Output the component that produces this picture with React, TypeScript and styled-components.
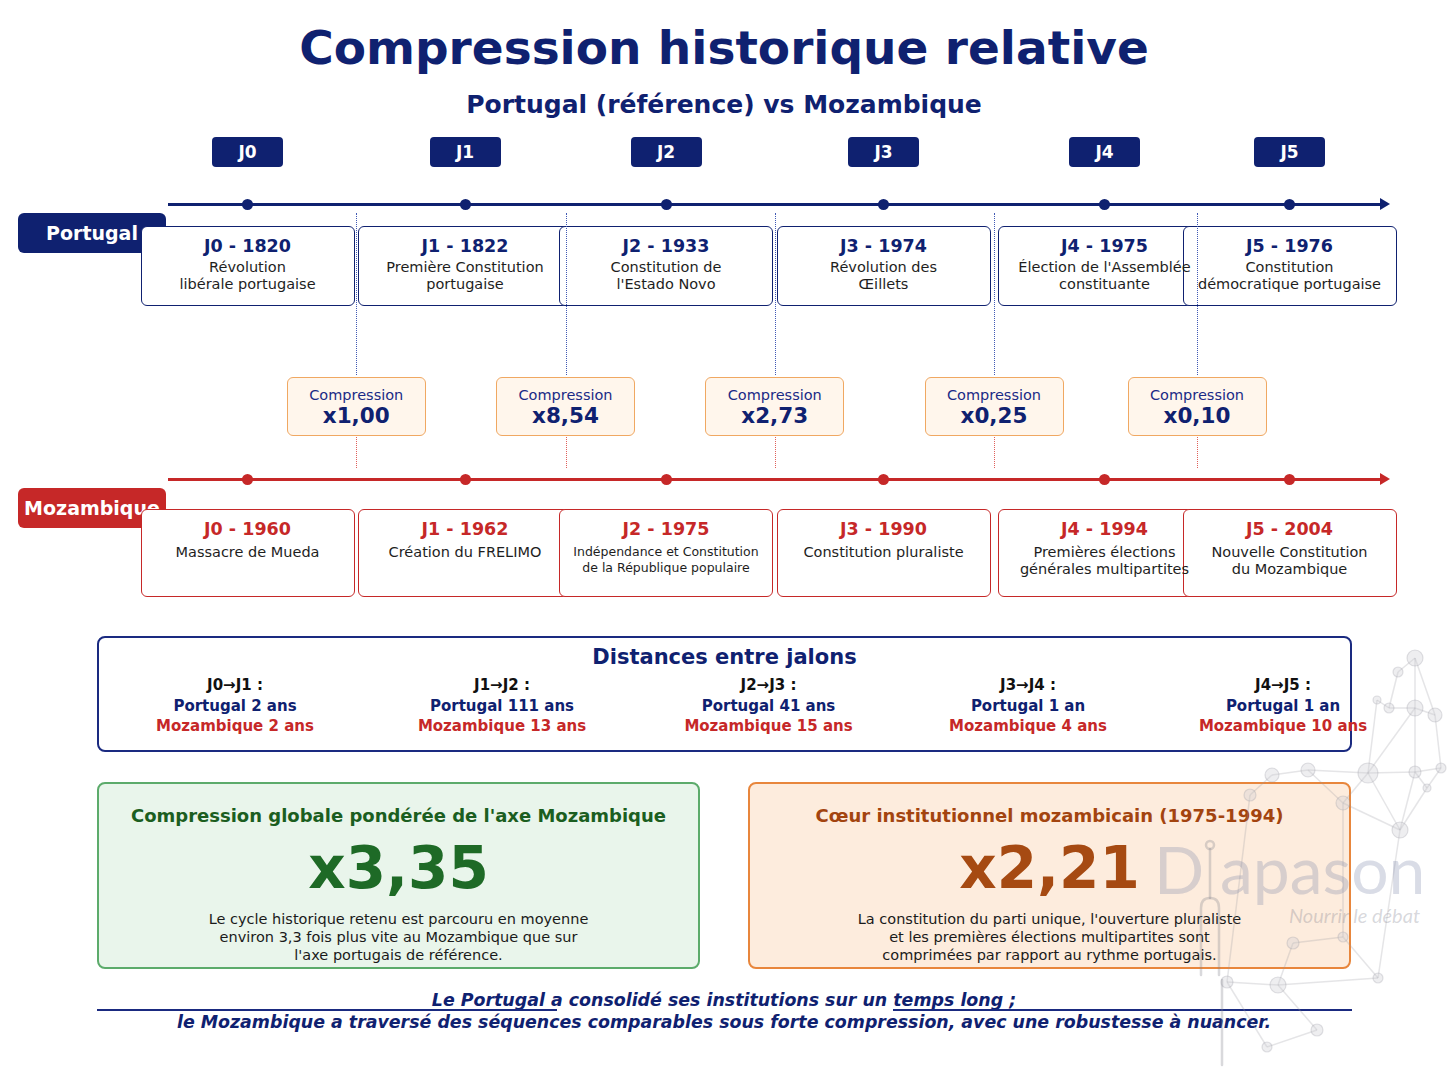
import React from 'react';
import styled, { createGlobalStyle } from 'styled-components';

const NAVY = '#0f2170';
const RED = '#c62828';

const GlobalStyle = createGlobalStyle`
  html, body {
    margin: 0;
    padding: 0;
    background: #ffffff;
  }
  body {
    font-family: 'DejaVu Sans', 'Liberation Sans', sans-serif;
  }
`;

const Page = styled.div`
  position: relative;
  width: 1448px;
  height: 1086px;
  overflow: hidden;
  background: #ffffff;
  display: flex;
  flex-direction: column;
  color: #1a1a1a;
`;

const Title = styled.h1`
  margin: 20px 0 0;
  font-size: 47px;
  line-height: 56px;
  font-weight: bold;
  text-align: center;
  color: ${NAVY};
`;

const Subtitle = styled.h2`
  margin: 13px 0 0;
  font-size: 25px;
  line-height: 31px;
  font-weight: bold;
  text-align: center;
  color: ${NAVY};
`;

/* ---------- timeline ---------- */

const Timeline = styled.div`
  position: relative;
  margin-top: 17px;
`;

const BadgeRow = styled.div`
  position: relative;
  height: 30px;
`;

const Badge = styled.div`
  position: absolute;
  top: 0;
  width: 71px;
  height: 30px;
  margin-left: -35.5px;
  border-radius: 4px;
  background: ${NAVY};
  color: #ffffff;
  font-size: 17px;
  font-weight: bold;
  display: flex;
  align-items: center;
  justify-content: center;
`;

const Track = styled.div<{ $top: number }>`
  position: relative;
  margin-top: ${({ $top }) => $top}px;
`;

const Axis = styled.div<{ $color: string }>`
  position: relative;
  height: 20px;

  &::before {
    content: '';
    position: absolute;
    left: 168px;
    width: 1214px;
    top: 8.5px;
    height: 3px;
    background: ${({ $color }) => $color};
  }

  &::after {
    content: '';
    position: absolute;
    left: 1380px;
    top: 4px;
    border-left: 10px solid ${({ $color }) => $color};
    border-top: 6px solid transparent;
    border-bottom: 6px solid transparent;
  }
`;

const Dot = styled.span<{ $color: string }>`
  position: absolute;
  top: 4.5px;
  width: 11px;
  height: 11px;
  margin-left: -5.5px;
  border-radius: 50%;
  background: ${({ $color }) => $color};
`;

const SideLabel = styled.div<{ $color: string }>`
  position: absolute;
  left: 18px;
  top: 19px;
  width: 148px;
  height: 40px;
  z-index: 0;
  border-radius: 6px;
  background: ${({ $color }) => $color};
  color: #ffffff;
  font-size: 19px;
  font-weight: bold;
  display: flex;
  align-items: center;
  justify-content: center;
`;

const CardRow = styled.div<{ $top: number; $height: number }>`
  position: relative;
  margin-top: ${({ $top }) => $top}px;
  height: ${({ $height }) => $height}px;
`;

const EventCard = styled.div<{ $color: string }>`
  position: absolute;
  top: 0;
  bottom: 0;
  width: 214px;
  margin-left: -107px;

  &::before {
    content: '';
    position: absolute;
    inset: 0;
    z-index: 1;
    background: #ffffff;
    border: 1.5px solid ${({ $color }) => $color};
    border-radius: 6px;
  }
`;

const CardBody = styled.div`
  position: relative;
  z-index: 3;
  padding-top: 9px;
  text-align: center;
  white-space: nowrap;
`;

const CardTitle = styled.div<{ $color: string }>`
  font-size: 17.5px;
  line-height: 22px;
  font-weight: bold;
  color: ${({ $color }) => $color};
`;

const CardDesc = styled.div<{ $small?: boolean; $gap: number }>`
  margin-top: ${({ $gap }) => $gap}px;
  font-size: ${({ $small }) => ($small ? '12.5px' : '14.5px')};
  line-height: ${({ $small }) => ($small ? '16px' : '17px')};
  color: #1e1e1e;
`;

const CompressionRow = styled.div`
  position: relative;
  margin-top: 71px;
  height: 59px;
`;

const CompressionBox = styled.div`
  position: absolute;
  top: 0;
  width: 139px;
  height: 59px;
  margin-left: -69.5px;
  box-sizing: border-box;
  padding-top: 8px;
  background: #fff6ec;
  border: 1.5px solid #f0a862;
  border-radius: 6px;
  text-align: center;
  color: ${NAVY};
`;

const CompressionLabel = styled.div`
  font-size: 14.5px;
  line-height: 18px;
  color: #1a2a86;
`;

const CompressionValue = styled.div`
  font-size: 21.5px;
  line-height: 24px;
  font-weight: bold;
`;

const Connector = styled.span<{ $color: string }>`
  position: absolute;
  width: 0;
  z-index: 2;
  border-left: 1px dotted ${({ $color }) => $color};
`;

/* ---------- distances ---------- */

const DistanceBox = styled.section`
  margin: 39px 0 0 97px;
  width: 1255px;
  height: 116px;
  box-sizing: border-box;
  padding-top: 6px;
  border: 2px solid #1a2a80;
  border-radius: 8px;
`;

const DistanceTitle = styled.div`
  font-size: 21px;
  line-height: 26px;
  font-weight: bold;
  text-align: center;
  color: ${NAVY};
`;

const DistanceGrid = styled.div`
  display: grid;
  grid-template-columns: 267px 267px 266px 253px 257px;
  margin: 5px 0 0 2.5px;
`;

const DistanceCol = styled.div`
  text-align: center;
  font-size: 15px;
  line-height: 20.5px;
  font-weight: bold;
  white-space: nowrap;
`;

const Interval = styled.div`
  color: #111111;
`;

const CountryLine = styled.div<{ $color: string }>`
  color: ${({ $color }) => $color};
`;

/* ---------- summary ---------- */

const SummaryRow = styled.div`
  display: flex;
  gap: 48px;
  margin: 30px 0 0 97px;
`;

const tones = {
  green: { bg: '#e9f5eb', border: '#5cab6b', title: '#1b5e20', value: '#1e6a26' },
  orange: { bg: '#fdecdd', border: '#e8863c', title: '#a3440f', value: '#a64a12' },
};

const SummaryCard = styled.div<{ $tone: keyof typeof tones }>`
  width: 603px;
  height: 187px;
  box-sizing: border-box;
  padding-top: 20px;
  border: 2px solid ${({ $tone }) => tones[$tone].border};
  border-radius: 8px;
  background: ${({ $tone }) => tones[$tone].bg};
  text-align: center;
`;

const SummaryTitle = styled.div<{ $tone: keyof typeof tones }>`
  font-size: 18px;
  line-height: 24px;
  font-weight: bold;
  color: ${({ $tone }) => tones[$tone].title};
`;

const BigValue = styled.div<{ $tone: keyof typeof tones }>`
  margin-top: 10px;
  font-size: 58px;
  line-height: 60px;
  font-weight: bold;
  color: ${({ $tone }) => tones[$tone].value};
`;

const SummaryText = styled.div`
  margin-top: 12px;
  font-size: 14.5px;
  line-height: 18px;
  color: #1a1a1a;
`;

/* ---------- footer ---------- */

const Footer = styled.footer`
  margin-top: 20px;
  display: flex;
  flex-direction: column;
`;

const FooterLine = styled.div`
  font-size: 17.4px;
  line-height: 22px;
  font-style: italic;
  font-weight: bold;
  text-align: center;
  color: ${NAVY};
`;

const FooterRule = styled.div`
  margin: -2px 0 0 97px;
  width: 1255px;
  height: 1.5px;
  background: linear-gradient(
    to right,
    #1a2a80 0,
    #1a2a80 460px,
    transparent 460px,
    transparent 796px,
    #1a2a80 796px
  );
`;

/* ---------- watermark ---------- */

const Watermark = styled.svg`
  position: absolute;
  left: 1140px;
  top: 640px;
  z-index: 5;
  pointer-events: none;
`;

const centers = [247.5, 465, 666, 883.5, 1104.5, 1289.5];
const mids = centers.slice(1).map((c, i) => (c + centers[i]) / 2);

const portugal = [
  { year: 1820, lines: ['Révolution', 'libérale portugaise'] },
  { year: 1822, lines: ['Première Constitution', 'portugaise'] },
  { year: 1933, lines: ['Constitution de', "l'Estado Novo"] },
  { year: 1974, lines: ['Révolution des', 'Œillets'] },
  { year: 1975, lines: ["Élection de l'Assemblée", 'constituante'] },
  { year: 1976, lines: ['Constitution', 'démocratique portugaise'] },
];

const mozambique = [
  { year: 1960, lines: ['Massacre de Mueda'] },
  { year: 1962, lines: ['Création du FRELIMO'] },
  { year: 1975, lines: ['Indépendance et Constitution', 'de la République populaire'], small: true },
  { year: 1990, lines: ['Constitution pluraliste'] },
  { year: 1994, lines: ['Premières élections', 'générales multipartites'] },
  { year: 2004, lines: ['Nouvelle Constitution', 'du Mozambique'] },
];

const compressions = ['x1,00', 'x8,54', 'x2,73', 'x0,25', 'x0,10'];

const distances = [
  { pt: '2 ans', mz: '2 ans' },
  { pt: '111 ans', mz: '13 ans' },
  { pt: '41 ans', mz: '15 ans' },
  { pt: '1 an', mz: '4 ans' },
  { pt: '1 an', mz: '10 ans' },
];

// logo network, coordinates relative to the watermark origin
const nodes: [number, number, number][] = [
  [275, 18, 8], [258, 32, 5], [237, 60, 4], [249, 68, 5], [275, 68, 8], [295, 75, 7],
  [228, 133, 10], [275, 132, 6], [301, 128, 5], [168, 130, 7], [132, 135, 7], [110, 155, 6],
  [203, 163, 7], [287, 148, 4], [260, 190, 8],
  [153, 303, 6], [138, 345, 8], [87, 342, 6], [203, 297, 5], [177, 390, 6], [127, 407, 5], [238, 338, 5],
];

const edges: [number, number][] = [
  [0, 1], [1, 3], [0, 4], [2, 3], [3, 4], [4, 5], [4, 6], [4, 7], [5, 8], [0, 5],
  [6, 7], [7, 8], [6, 9], [9, 10], [10, 11], [6, 12], [6, 14], [7, 13], [13, 14], [12, 14],
  [7, 14], [9, 12], [8, 13], [2, 6], [15, 16], [16, 17], [16, 19], [19, 20], [15, 18],
  [18, 21], [16, 21], [17, 20], [12, 18], [11, 17], [14, 21],
];

const EventTrack = ({
  label,
  color,
  events,
  top,
  cardTop,
  cardHeight,
  descGap,
}: {
  label: string;
  color: string;
  events: { year: number; lines: string[]; small?: boolean }[];
  top: number;
  cardTop: number;
  cardHeight: number;
  descGap: number;
}) => (
  <Track $top={top}>
    <Axis $color={color}>
      {centers.map((c) => (
        <Dot key={c} $color={color} style={{ left: c }} />
      ))}
    </Axis>
    <SideLabel $color={color}>{label}</SideLabel>
    <CardRow $top={cardTop} $height={cardHeight}>
      {events.map((ev, i) => (
        <EventCard key={ev.year + label} $color={color} style={{ left: centers[i] }}>
          <CardBody>
            <CardTitle $color={color}>
              J{i} - {ev.year}
            </CardTitle>
            <CardDesc $gap={descGap} $small={ev.small}>
              {ev.lines.map((l) => (
                <div key={l}>{l}</div>
              ))}
            </CardDesc>
          </CardBody>
        </EventCard>
      ))}
    </CardRow>
  </Track>
);

export default function App() {
  return (
    <Page>
      <GlobalStyle />
      <Title>Compression historique relative</Title>
      <Subtitle>Portugal (référence) vs Mozambique</Subtitle>

      <Timeline>
        <BadgeRow>
          {centers.map((c, i) => (
            <Badge key={c} style={{ left: c }}>
              J{i}
            </Badge>
          ))}
        </BadgeRow>

        <EventTrack
          label="Portugal"
          color={NAVY}
          events={portugal}
          top={27}
          cardTop={12}
          cardHeight={80}
          descGap={2}
        />

        <CompressionRow>
          {mids.map((m, i) => (
            <CompressionBox key={m} style={{ left: m }}>
              <CompressionLabel>Compression</CompressionLabel>
              <CompressionValue>{compressions[i]}</CompressionValue>
            </CompressionBox>
          ))}
        </CompressionRow>

        <EventTrack
          label="Mozambique"
          color={RED}
          events={mozambique}
          top={33}
          cardTop={20}
          cardHeight={88}
          descGap={4}
        />

        {mids.map((m) => (
          <React.Fragment key={m}>
            <Connector $color="#4059b5" style={{ left: m, top: 76, height: 162 }} />
            <Connector $color="#e0605a" style={{ left: m, top: 300, height: 31 }} />
          </React.Fragment>
        ))}
      </Timeline>

      <DistanceBox>
        <DistanceTitle>Distances entre jalons</DistanceTitle>
        <DistanceGrid>
          {distances.map((d, i) => (
            <DistanceCol key={i}>
              <Interval>
                J{i}→J{i + 1} :
              </Interval>
              <CountryLine $color={NAVY}>Portugal {d.pt}</CountryLine>
              <CountryLine $color={RED}>Mozambique {d.mz}</CountryLine>
            </DistanceCol>
          ))}
        </DistanceGrid>
      </DistanceBox>

      <SummaryRow>
        <SummaryCard $tone="green">
          <SummaryTitle $tone="green">Compression globale pondérée de l'axe Mozambique</SummaryTitle>
          <BigValue $tone="green">x3,35</BigValue>
          <SummaryText>
            Le cycle historique retenu est parcouru en moyenne
            <br />
            environ 3,3 fois plus vite au Mozambique que sur
            <br />
            l'axe portugais de référence.
          </SummaryText>
        </SummaryCard>
        <SummaryCard $tone="orange">
          <SummaryTitle $tone="orange">Cœur institutionnel mozambicain (1975-1994)</SummaryTitle>
          <BigValue $tone="orange">x2,21</BigValue>
          <SummaryText>
            La constitution du parti unique, l'ouverture pluraliste
            <br />
            et les premières élections multipartites sont
            <br />
            comprimées par rapport au rythme portugais.
          </SummaryText>
        </SummaryCard>
      </SummaryRow>

      <Footer>
        <FooterLine>Le Portugal a consolidé ses institutions sur un temps long ;</FooterLine>
        <FooterRule />
        <FooterLine>
          le Mozambique a traversé des séquences comparables sous forte compression, avec une robustesse à nuancer.
        </FooterLine>
      </Footer>

      <Watermark width={308} height={446} viewBox="0 0 308 446">
        <g stroke="rgba(150,150,160,0.25)" strokeWidth={1.5} fill="none">
          {edges.map(([a, b], i) => (
            <line key={i} x1={nodes[a][0]} y1={nodes[a][1]} x2={nodes[b][0]} y2={nodes[b][1]} />
          ))}
        </g>
        <g fill="rgba(205,205,212,0.35)" stroke="rgba(150,150,160,0.28)" strokeWidth={1.2}>
          {nodes.map(([x, y, r], i) => (
            <circle key={i} cx={x} cy={y} r={r} />
          ))}
        </g>
        <g stroke="rgba(130,130,140,0.3)" strokeWidth={2.5} fill="none" strokeLinecap="round">
          <circle cx={70} cy={205} r={4} />
          <line x1={70} y1={209} x2={70} y2={258} />
          <path d="M61 335 L61 268 Q61 258 70 258 Q79 258 79 268 L79 335" />
          <line x1={82} y1={340} x2={82} y2={425} />
        </g>
        <text
          x={14}
          y={254}
          fontFamily="Lato, 'Open Sans', sans-serif"
          fontSize={66}
          fill="rgba(110,120,160,0.26)"
        >
          D
        </text>
        <text
          x={80}
          y={254}
          fontFamily="Lato, 'Open Sans', sans-serif"
          fontSize={66}
          fill="rgba(110,120,160,0.26)"
        >
          apason
        </text>
        <text
          x={280}
          y={283}
          textAnchor="end"
          fontFamily="Lato, 'Open Sans', sans-serif"
          fontStyle="italic"
          fontSize={20}
          fill="rgba(120,120,135,0.3)"
        >
          Nourrir le débat
        </text>
      </Watermark>
    </Page>
  );
}
